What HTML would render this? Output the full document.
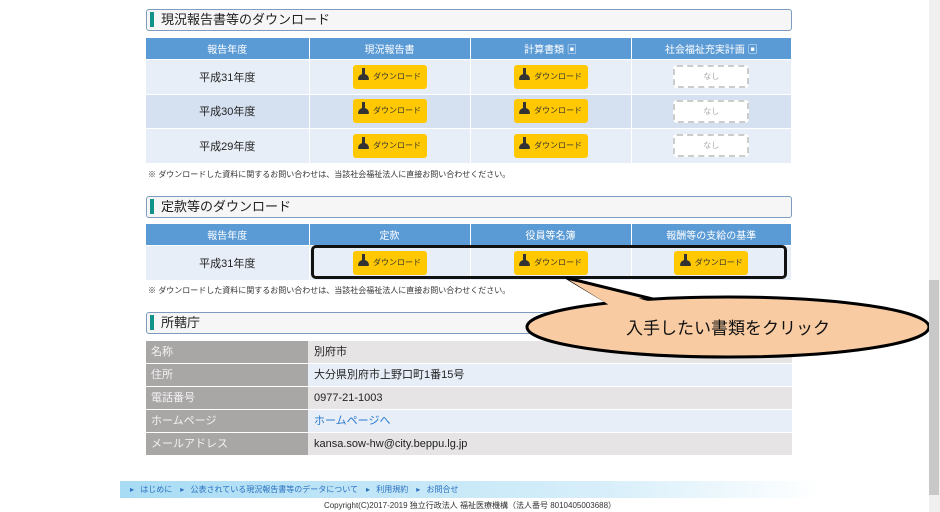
<!DOCTYPE html>
<html><head><meta charset="utf-8"><style>
*{margin:0;padding:0;box-sizing:border-box}
body{width:940px;height:512px;background:#fff;position:relative;overflow:hidden;font-family:"Liberation Sans","Noto Sans CJK JP",sans-serif;color:#222}
.a{position:absolute}
.title{position:absolute;left:146px;width:646px;height:22px;border:1.5px solid #7d9cc0;border-radius:3px;background:#f6f6f6;font-size:13px;line-height:19px;padding-left:14px}
.title:before{content:"";position:absolute;left:3px;top:2px;width:4px;height:15px;background:#12938a}
table{position:absolute;left:146px;width:646px;border-collapse:collapse;font-size:10px}
th{background:#5b9bd5;color:#fff;font-weight:normal;height:21px;border-right:1px solid #fff}
td{text-align:center;border-right:1px solid #fff;border-top:1px solid #fff;font-size:11px}
.r1{background:#e8eef7}.r2{background:#d5e0f0}
.dl{display:inline-block;background:#ffc800;border-radius:3px;width:74px;height:24px;font-size:8px;line-height:24px;color:#333;vertical-align:middle}
.dl b{display:inline-block;width:11px;height:11px;margin-right:4px;vertical-align:-2px;position:relative}
.dl b:before{content:"";position:absolute;left:4px;top:-2px;width:3px;height:7px;background:#333}
.dl b:after{content:"";position:absolute;left:0;top:4px;width:11px;height:6px;background:#333;border-radius:5px 5px 1px 1px}
.na{display:inline-block;width:76px;height:23px;border:2px dashed #ccc;border-radius:4px;background:#fff;color:#aaa;font-size:8px;line-height:19px;vertical-align:middle}
.note{position:absolute;left:148px;font-size:8px;color:#333}
.info{position:absolute;left:146px;width:646px;font-size:11px}
.info div{display:flex;height:22px;margin-bottom:1px}
.info span:first-child{width:162px;background:#a9a6a6;color:#f2f2f2;padding-left:5px;line-height:22px;margin-right:2px}
.info span:last-child{flex:1;padding-left:4px;line-height:22px}
</style></head><body>
<div class="title" style="top:9px">現況報告書等のダウンロード</div>
<table style="top:38px">
<tr><th style="width:163px">報告年度</th><th style="width:161px">現況報告書</th><th style="width:161px">計算書類 ▣</th><th>社会福祉充実計画 ▣</th></tr>
<tr class="r1" style="height:35px"><td>平成31年度</td><td><span class="dl"><b></b>ダウンロード</span></td><td><span class="dl"><b></b>ダウンロード</span></td><td><span class="na">なし</span></td></tr>
<tr class="r2" style="height:34px"><td>平成30年度</td><td><span class="dl"><b></b>ダウンロード</span></td><td><span class="dl"><b></b>ダウンロード</span></td><td><span class="na">なし</span></td></tr>
<tr class="r1" style="height:35px"><td>平成29年度</td><td><span class="dl"><b></b>ダウンロード</span></td><td><span class="dl"><b></b>ダウンロード</span></td><td><span class="na">なし</span></td></tr>
</table>
<div class="note" style="top:169px">※ ダウンロードした資料に関するお問い合わせは、当該社会福祉法人に直接お問い合わせください。</div>
<div class="title" style="top:196px">定款等のダウンロード</div>
<table style="top:224px">
<tr><th style="width:163px">報告年度</th><th style="width:161px">定款</th><th style="width:161px">役員等名簿</th><th>報酬等の支給の基準</th></tr>
<tr class="r1" style="height:35px"><td>平成31年度</td><td><span class="dl"><b></b>ダウンロード</span></td><td><span class="dl"><b></b>ダウンロード</span></td><td><span class="dl"><b></b>ダウンロード</span></td></tr>
</table>
<div class="a" style="left:311px;top:245px;width:476px;height:34px;border:3px solid #111;border-radius:5px"></div>
<div class="note" style="top:285px">※ ダウンロードした資料に関するお問い合わせは、当該社会福祉法人に直接お問い合わせください。</div>
<div class="title" style="top:312px">所轄庁</div>
<div class="info" style="top:341px">
<div style="background:#e6e4e4"><span>名称</span><span>別府市</span></div>
<div style="background:#e8eef7"><span>住所</span><span>大分県別府市上野口町1番15号</span></div>
<div style="background:#e6e4e4"><span>電話番号</span><span>0977-21-1003</span></div>
<div style="background:#e8eef7"><span>ホームページ</span><span style="color:#2a7bd0">ホームページへ</span></div>
<div style="background:#e6e4e4"><span>メールアドレス</span><span>kansa.sow-hw@city.beppu.lg.jp</span></div>
</div>
<svg class="a" style="left:0;top:0" width="940" height="512">
<path d="M567 278 L612 305 L665 302 Z" fill="#f8cba2" stroke="#000" stroke-width="3" stroke-linejoin="round"/>
<ellipse cx="728" cy="327" rx="201" ry="30" fill="#f8cba2" stroke="#000" stroke-width="3"/>
<path d="M569 280 L614 308 L663 305 Z" fill="#f8cba2"/>
<text x="728" y="334" text-anchor="middle" font-size="17" font-family="Liberation Sans, Noto Sans CJK JP, sans-serif" fill="#111">入手したい書類をクリック</text>
</svg>
<div class="a" style="left:120px;top:481px;width:700px;height:17px;background:linear-gradient(90deg,#a8dcf4,#d8effa 70%,#fff);font-size:8px;line-height:17px;color:#2a6fc0;padding-left:10px;word-spacing:4px">▸ はじめに　▸ 公表されている現況報告書等のデータについて　▸ 利用規約　▸ お問合せ</div>
<div class="a" style="left:0;top:500px;width:940px;text-align:center;font-size:8px;color:#333">Copyright(C)2017-2019 独立行政法人 福祉医療機構（法人番号 8010405003688）</div>
<div class="a" style="left:929px;top:0;width:11px;height:512px;background:#f0f0f0"></div>
<div class="a" style="left:929px;top:280px;width:10px;height:215px;background:#c8c8c8"></div>
</body></html>
